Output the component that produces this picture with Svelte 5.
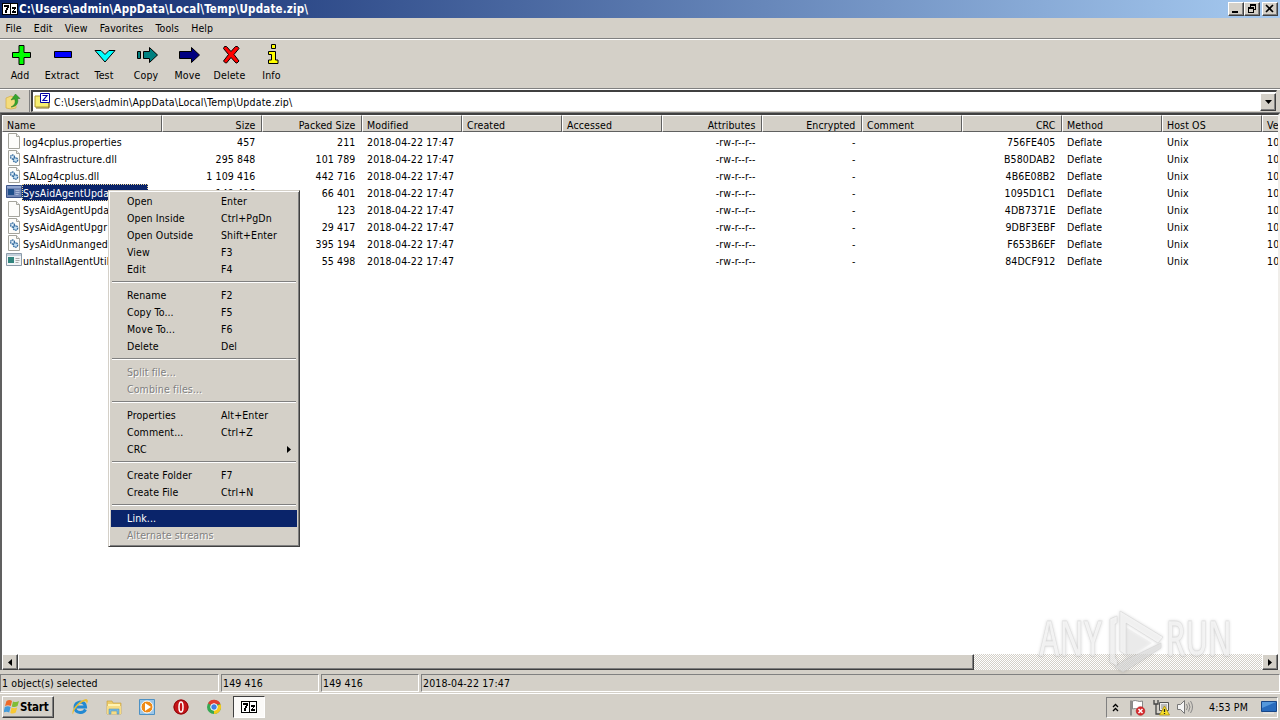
<script>
  const menus = ["File", "Edit", "View", "Favorites", "Tools", "Help"];
  const path = "C:\\Users\\admin\\AppData\\Local\\Temp\\Update.zip\\";

  const tools = [
    { name: "Add", width: 38 },
    { name: "Extract", width: 46 },
    { name: "Test", width: 38 },
    { name: "Copy", width: 46 },
    { name: "Move", width: 37 },
    { name: "Delete", width: 47 },
    { name: "Info", width: 37 },
  ];

  const columns = [
    { key: "name", label: "Name", width: 160 },
    { key: "size", label: "Size", right: true },
    { key: "packed", label: "Packed Size", right: true },
    { key: "modified", label: "Modified" },
    { key: "created", label: "Created" },
    { key: "accessed", label: "Accessed" },
    { key: "attributes", label: "Attributes", right: true },
    { key: "encrypted", label: "Encrypted", right: true },
    { key: "comment", label: "Comment" },
    { key: "crc", label: "CRC", right: true },
    { key: "method", label: "Method" },
    { key: "host", label: "Host OS" },
    { key: "version", label: "Version" },
  ];

  const files = [
    { icon: "file", name: "log4cplus.properties", size: "457", packed: "211", crc: "756FE405" },
    { icon: "dll", name: "SAInfrastructure.dll", size: "295 848", packed: "101 789", crc: "B580DAB2" },
    { icon: "dll", name: "SALog4cplus.dll", size: "1 109 416", packed: "442 716", crc: "4B6E08B2" },
    { icon: "exe", name: "SysAidAgentUpda", size: "149 416", packed: "66 401", crc: "1095D1C1", selected: true },
    { icon: "file", name: "SysAidAgentUpda", size: "", packed: "123", crc: "4DB7371E" },
    { icon: "dll", name: "SysAidAgentUpgr", size: "", packed: "29 417", crc: "9DBF3EBF" },
    { icon: "dll", name: "SysAidUnmangedU", size: "", packed: "395 194", crc: "F653B6EF" },
    { icon: "exe", name: "unInstallAgentUtil", size: "", packed: "55 498", crc: "84DCF912" },
  ].map((f) => ({
    ...f,
    modified: "2018-04-22 17:47",
    attributes: "-rw-r--r--",
    encrypted: "-",
    method: "Deflate",
    host: "Unix",
    version: "10",
  }));

  const groups = [
    [["Open", "Enter"], ["Open Inside", "Ctrl+PgDn"], ["Open Outside", "Shift+Enter"], ["View", "F3"], ["Edit", "F4"]],
    [["Rename", "F2"], ["Copy To...", "F5"], ["Move To...", "F6"], ["Delete", "Del"]],
    [["Split file...", ""], ["Combine files...", ""]],
    [["Properties", "Alt+Enter"], ["Comment...", "Ctrl+Z"], ["CRC", ""]],
    [["Create Folder", "F7"], ["Create File", "Ctrl+N"]],
    [["Link...", ""], ["Alternate streams", ""]],
  ];
  const disabled = ["Split file...", "Combine files...", "Alternate streams"];
  let active = "Link...";
</script>

{#snippet sevenZip()}
  <svg width="16" height="12" viewBox="0 0 16 12" shape-rendering="crispEdges">
    <path d="M0 0h16v12H0z" />
    <path d="M1 1h14v10H1z" fill="#fff" />
    <path d="M2 2h5v3H6v2H5v3H3V7h1V5h1V4H2zM8 1h1v10H8zM10 4h4v2h-1v1h-1v1h2v2h-4V8h1V7h1V6h-2z" />
  </svg>
{/snippet}

<div class="screen">
  <div class="title">
    {@render sevenZip()}
    <span class="caption">{path}</span>
    <div class="buttons">
      <button aria-label="Minimize"><svg width="12" height="10"><path d="M2 7h6v2H2z" /></svg></button>
      <button aria-label="Restore" class="restore"><svg width="12" height="10" shape-rendering="crispEdges"><path d="M4 0h6v6H8V5h1V2H5v1H4zM2 3h6v6H2zm1 2v3h4V5z" fill-rule="evenodd" /></svg></button>
      <button aria-label="Close"><svg width="12" height="10"><path d="M2 1l7 7M9 1L2 8" stroke="#000" stroke-width="1.600" /></svg></button>
    </div>
  </div>

  <div class="menubar">
    {#each menus as item}<span>{item}</span>{/each}
  </div>

  <div class="toolbar">
    {#each tools as tool}
      <div class="tool" style="width: {tool.width}px">
        <svg width="24" height="24" viewBox="0 0 24 24" stroke="#000" stroke-width="1">
          {#if tool.name === "Add"}
            <path d="M11 2.500h5v7h6.500v5H16v7h-5v-7H4.500v-5H11z" fill="#0f0" />
          {:else if tool.name === "Extract"}
            <path d="M4.500 8.500h17v6h-17z" fill="#00f" />
          {:else if tool.name === "Test"}
            <path d="M3 7.500h6l4 4 4-4h6L13 19z" fill="#0ff" />
          {:else if tool.name === "Copy"}
            <path d="M3.500 8.500h3v7h-3zM9.500 8.500h6v-4l8 7.500-8 7.500v-4h-6z" fill="#008080" />
          {:else if tool.name === "Move"}
            <path d="M3.500 8.500h12v-4l8 7.500-8 7.500v-4h-12z" fill="#000080" />
          {:else if tool.name === "Delete"}
            <path d="M6.500 3.500h2l4.500 5 4.500-5h2l1.500 2-5 6 5 6.500-2 2h-1L13 14.500 8.500 20h-1l-2-2 5-6.500-5-6z" fill="#f00" />
          {:else}
            <path d="M11.500 1.500h4v4h-4zM8.500 8.500h7v8.500h2.500v3.500H8.500V17h3v-5.500h-3z" fill="#ff0" />
          {/if}
        </svg>
        <span>{tool.name}</span>
      </div>
    {/each}
  </div>

  <div class="address">
    <div class="up">
      <svg width="17" height="18" viewBox="0 0 17 18">
        <path d="M1 6l5-2 5 2v10l-5 1-5-1z" fill="#f4dc7c" stroke="#d2ae45" stroke-width=".7" />
        <path d="M6 15c4-2 5-5 3.500-8L6 8l4.500-6L15 6.500h-2.500C14 11 11 15 6 15z" fill="#35a62e" stroke="#24751d" stroke-width=".5" />
      </svg>
    </div>
    <div class="combo">
      <svg width="17" height="16" viewBox="0 0 17 16">
        <path d="M1 3h5l2 2h7v9H1z" fill="#f7ef72" stroke="#b19829" />
        <path d="M2 15h13V5" stroke="#817119" fill="none" />
        <path d="M6.500.5h9v9h-9z" fill="#fff" stroke="#0000a0" />
        <path d="M8.500 2.500h4.500L9 7.500h4.500" fill="none" stroke="#0000b0" stroke-width="1.200" />
      </svg>
      <span>{path}</span>
      <button class="drop" aria-label="Show folders"><svg width="7" height="4"><path d="M0 0h7L3.500 4z" /></svg></button>
    </div>
  </div>

  <div class="list">
    <div class="row head">
      {#each columns as col}
        <div class="cell" class:right={col.right} style="width: {col.width ?? 100}px">{col.label}</div>
      {/each}
    </div>
    {#each files as file}
      <div class="row">
        {#each columns as col}
          <div class="cell" class:right={col.right} class:name={col.key === "name"} style="width: {col.width ?? 100}px">
            {#if col.key === "name"}
              <svg width="16" height="16" viewBox="0 0 16 16">
                {#if file.icon === "exe"}
                  <path d="M.5 1.500h15v12H.5z" fill={file.selected ? "#7186b5" : "#f2f5f7"} stroke={file.selected ? "#3c5489" : "#8b9aa8"} />
                  <path d="M1 2h14v2H1z" fill={file.selected ? "#92a7d0" : "#c3d0db"} />
                  <path d="M2 5h6v6H2z" fill={file.selected ? "#1e4f8b" : "#32857e"} />
                  <path d="M9.500 6.500h4M9.500 8.500h4M9.500 10.500h3" stroke={file.selected ? "#a9b8d8" : "#aaa"} />
                {:else}
                  <path d="M2.500.5h8l3 3v12h-11z" fill="#fcfcfa" stroke="#a4a49c" />
                  <path d="M10.500.5v3h3" fill="#eee" stroke="#a4a49c" />
                  {#if file.icon === "dll"}
                    <circle cx="6.500" cy="7" r="2" fill="#dcebf6" stroke="#346b9f" stroke-width="1.300" stroke-dasharray="1.500 .5" />
                    <circle cx="9.500" cy="10" r="2.200" fill="#c4e0f3" stroke="#346b9f" stroke-width="1.300" stroke-dasharray="1.500 .5" />
                  {/if}
                {/if}
              </svg>
              <span class="filename" class:selected={file.selected}>{file.name}</span>
            {:else}
              {file[col.key] ?? ""}
            {/if}
          </div>
        {/each}
      </div>
    {/each}
    <div class="scrollbar">
      <button aria-label="Scroll left"><svg width="4" height="7"><path d="M4 0v7L0 3.500z" /></svg></button>
      <div class="thumb"></div>
      <div class="track"></div>
      <button aria-label="Scroll right"><svg width="4" height="7"><path d="M0 0v7l4-3.500z" /></svg></button>
    </div>
  </div>

  <div class="status">
    <span class="first">1 object(s) selected</span>
    <span class="short">149 416</span>
    <span class="short">149 416</span>
    <span class="rest">2018-04-22 17:47</span>
  </div>

  <div class="taskbar">
    <button class="start">
      <svg width="16" height="16" viewBox="0 0 16 16">
        <path d="M2.500 2q3-2 5.500 0L6.800 7Q4 5.500 1 7z" fill="#ee6a28" />
        <path d="M9 2.400q3 1.500 6-.4L13.500 7q-3 2-5.700.4z" fill="#80bd37" />
        <path d="M.8 8q3-1.500 5.800 0l-1.400 5.500Q2.500 12-.5 13.500z" fill="#449bda" />
        <path d="M7.500 8.500q3 1.500 5.700 0l-1.400 5q-3 2-5.500.4z" fill="#f8c833" />
      </svg>
      <span>Start</span>
    </button>
    <div class="quick">
      <svg width="18" height="18" viewBox="0 0 18 18">
        <path d="M14.500 11.500Q12.500 15 9 14.500 4 14 4 9.500T9 4q5 0 5.500 5H5" fill="none" stroke="#2289d2" stroke-width="3" />
        <path d="M2 16.500C-1 13 8 2 15 1c3 .5 1.500 4 .5 5 .5-3-1-3.500-4-2C7 7 2.500 12 2 16.500z" fill="#e9bd32" />
      </svg>
      <svg width="18" height="18" viewBox="0 0 18 18">
        <path d="M2 3h5l1 2h8v11H2z" fill="#edcc6b" stroke="#c49c38" stroke-width=".6" />
        <path d="M3 6h12v3H3z" fill="#fff3b2" /><path d="M2 8h14v8H2z" fill="#f7dc83" />
        <path d="M4 16v-5h10v5h-2v-3H6v3z" fill="#78b9df" stroke="#4b8db7" stroke-width=".5" />
      </svg>
      <svg width="18" height="18" viewBox="0 0 18 18">
        <path d="M1.500 1.500h15v15h-15z" fill="#9bc6e8" stroke="#4d91c4" />
        <circle cx="9" cy="9" r="6" fill="#ef8a17" stroke="#fff" /><path d="M7 5l6 4-6 4z" fill="#fff" />
      </svg>
      <svg width="18" height="18" viewBox="0 0 18 18">
        <circle cx="9" cy="9" r="7.500" fill="#c51418" /><circle cx="9" cy="9" r="7" fill="none" stroke="#8c080c" />
        <ellipse cx="9" cy="9" rx="2" ry="5" fill="#c51418" stroke="#fff" stroke-width="1.500" />
      </svg>
      <svg width="18" height="18" viewBox="0 0 18 18">
        <circle cx="9" cy="9" r="7" fill="#36a852" />
        <path d="M9 9L3 5.200a7 7 0 0 1 12.500 1H9z" fill="#e13c30" />
        <path d="M9 9l6.500-2.800A7 7 0 0 1 9 16z" fill="#f6c91c" />
        <circle cx="9" cy="9" r="3.300" fill="#3e80e5" stroke="#fff" />
      </svg>
    </div>
    <div class="task">{@render sevenZip()}</div>
    <div class="tray">
      <svg class="chevron" width="7" height="9"><path d="M1 4l2.500-2.500L6 4M1 8l2.500-2.500L6 8" fill="none" stroke="#000" stroke-width="1.300" /></svg>
      <svg class="flag" width="17" height="17" viewBox="0 0 17 17">
        <path d="M2 1.500v15" stroke="#777" stroke-width="1.500" /><path d="M3.500 2q3-1 5 0t5 0v8q-3 1-5 0t-5 0z" fill="#fff" stroke="#888" />
        <circle cx="11.500" cy="12" r="4.300" fill="#d82b2f" stroke="#b3171a" stroke-width=".6" /><path d="M9.500 10l4 4m0-4l-4 4" stroke="#fff" stroke-width="1.500" />
      </svg>
      <svg class="network" width="17" height="17" viewBox="0 0 17 17">
        <path d="M6.500 3.500h9v8h-9z" fill="#eee" stroke="#555" /><path d="M8 5h6v5H8z" fill="#bbb" />
        <path d="M1 1v4h4V1M3 5v10h4" stroke="#444" fill="none" stroke-width="1.300" />
        <path d="M11.500 7l5 9h-10z" fill="#f8df28" stroke="#a48500" stroke-width=".7" /><path d="M11.500 10v3m0 1v1" stroke="#222" stroke-width="1.300" />
      </svg>
      <svg class="sound" width="18" height="16" viewBox="0 0 18 16">
        <path d="M1.500 5.500h3L8.500 1.500v13l-4-4h-3z" fill="#f5f5f5" stroke="#777" />
        <path d="M10.500 5q2 3 0 6M12.500 3.500q3 4.500 0 9M14.500 2q4 6 0 12" fill="none" stroke="#888" />
      </svg>
      <span>4:53 PM</span>
      <svg class="desktop" width="16" height="14" viewBox="0 0 16 14">
        <path d="M.5 1.500h15v10H.5z" fill="#276bbd" stroke="#174687" /><path d="M1 2h14L1 8z" fill="#5498dc" /><path d="M2 13h11" stroke="#eee" />
      </svg>
    </div>
  </div>

  <div class="context">
    {#each groups as group, i}
      {#if i}<div class="separator"></div>{/if}
      {#each group as [label, key]}
        <div class="item" class:active={label === active} class:disabled={disabled.includes(label)}>
          <span class="label">{label}</span><span>{key}</span>
          {#if label === "CRC"}<svg class="more" width="4" height="7"><path d="M0 0v7l4-3.500z" /></svg>{/if}
        </div>
      {/each}
    {/each}
  </div>

  <svg class="watermark" width="200" height="68" viewBox="0 0 200 68">
    <g fill="#fff" fill-opacity=".6" stroke="#c4c4c4" stroke-opacity=".35" stroke-width="1">
      <text x="4" y="49" textLength="63" lengthAdjust="spacingAndGlyphs">ANY</text>
      <text x="131" y="49" textLength="66" lengthAdjust="spacingAndGlyphs">RUN</text>
      <path d="M85 4l43 26-5 6-32-20v32l-6-4z" />
      <path d="M82 9l-7 3v43l7 4v-6l-2-2V17l2-1z" />
      <path d="M126 36v5L88 65l-8-5 9-6z" fill="#e4e4e4" />
      <path d="M91 20l26 16-26 17z" fill="#ddd" fill-opacity=".25" stroke="none" />
    </g>
  </svg>
</div>

<style>
  :global(body) {
    margin: 0;
    overflow: hidden;
  }

  .screen {
    position: relative;
    display: flex;
    flex-direction: column;
    width: 1280px;
    height: 720px;
    overflow: hidden;
    background: #d4d0c8;
    color: #000;
    font-family: "DejaVu Sans Condensed", "DejaVu Sans", sans-serif;
    font-stretch: condensed;
    font-size: 10.5px;
    letter-spacing: 0.12px;
    line-height: 17px;
    white-space: nowrap;
    cursor: default;
  }

  svg {
    display: block;
    flex: none;
  }

  button {
    display: flex;
    align-items: center;
    justify-content: center;
    flex: none;
    box-sizing: border-box;
    padding: 0;
    border: 1px solid;
    border-color: #fff #404040 #404040 #fff;
    box-shadow: inset -1px -1px #808080;
    background: #d4d0c8;
    color: #000;
    font: inherit;
  }

  .title {
    display: flex;
    align-items: center;
    height: 18px;
    padding: 0 2px;
    background: linear-gradient(90deg, #0a246a, #a6caf0);
    color: #fff;
    font-size: 11.5px;
    font-weight: bold;
  }

  .caption {
    flex: 1;
    padding-left: 1px;
    letter-spacing: 0.17px;
  }

  .buttons {
    display: flex;
  }

  .buttons button {
    width: 16px;
    height: 14px;
  }

  .restore {
    margin-right: 2px;
  }

  .menubar {
    display: flex;
    gap: 12.1px;
    height: 20px;
    padding-left: 5.5px;
    border-bottom: 1px solid #808080;
    line-height: 20px;
  }

  .toolbar {
    display: flex;
    height: 48px;
    border-top: 1px solid #fff;
    border-bottom: 1px solid #808080;
  }

  .tool {
    display: flex;
    flex-direction: column;
    align-items: center;
    padding-top: 3px;
  }

  .tool:first-child {
    padding-left: 1px;
  }

  .tool span {
    height: 17px;
  }

  .address {
    display: flex;
    height: 24px;
    border-top: 1px solid #fff;
    border-bottom: 1px solid #808080;
    box-sizing: border-box;
  }

  .up {
    width: 24px;
    padding: 2px 0 0 5px;
    border-right: 1px solid #808080;
  }

  .combo {
    display: flex;
    align-items: center;
    flex: 1;
    box-sizing: border-box;
    height: 22px;
    margin: 0 3px 0 1px;
    padding-left: 1px;
    border: 2px solid #404040;
    border-right: 1px solid #d4d0c8;
    border-bottom: 1px solid #d4d0c8;
    background: #fff;
  }

  .combo svg {
    margin-top: -2px;
  }

  .combo span {
    flex: 1;
    padding: 1px 0 0 3px;
    letter-spacing: 0.2px;
  }

  .drop {
    width: 16px;
    height: 18px;
  }

  .drop svg {
    margin: 0;
  }

  .list {
    display: flex;
    flex-direction: column;
    flex: none;
    height: 557px;
    box-sizing: border-box;
    border-top: 2px solid #404040;
    border-left: 2px solid #606060;
    border-right: 2px solid #f0eeea;
    background: #fff;
    overflow: hidden;
  }

  .row {
    display: flex;
    flex: none;
    height: 17px;
    line-height: 19px;
  }

  .head {
    margin-bottom: 1px;
    background: #d4d0c8;
  }

  .cell {
    flex: none;
    box-sizing: border-box;
    padding: 0 6.5px 0 5px;
    overflow: hidden;
  }

  .head .cell {
    border: 1px solid;
    border-color: #fff #606060 #606060 #fff;
    padding: 0 5.5px 0 4px;
    line-height: 18px;
  }

  .right {
    text-align: right;
  }

  .cell.name {
    display: flex;
    padding: 0 0 0 4px;
  }

  .filename {
    padding: 0 1px;
  }

  .selected {
    box-sizing: border-box;
    width: 126px;
    height: 17px;
    padding: 0;
    border: 1px dotted #f5db95;
    background: #0a246a;
    color: #fff;
    line-height: 17px;
  }

  .scrollbar {
    display: flex;
    height: 16px;
    margin-top: auto;
  }

  .scrollbar button {
    width: 16px;
    height: 16px;
  }

  .thumb {
    box-sizing: border-box;
    width: 956px;
    border: 1px solid;
    border-color: #fff #404040 #404040 #fff;
    box-shadow: inset -1px -1px #808080;
    background: #d4d0c8;
  }

  .track {
    flex: 1;
    background: repeating-conic-gradient(#d4d0c8 0 25%, #fff 0 50%) 0 0 / 2px 2px;
  }

  .status {
    display: flex;
    gap: 2px;
    height: 19px;
    padding-top: 4px;
  }

  .status span {
    box-sizing: border-box;
    height: 18px;
    border: 1px solid;
    border-color: #808080 #fff #fff #808080;
    padding-left: 1px;
    line-height: 17px;
  }

  .first {
    width: 219px;
  }

  .short {
    width: 98px;
  }

  .rest {
    flex: 1;
  }

  .taskbar {
    display: flex;
    align-items: center;
    flex: 1;
    border-top: 1px solid #fff;
    padding: 0 2px;
  }

  .start {
    width: 52px;
    height: 22px;
    justify-content: flex-start;
    padding-left: 1px;
    gap: 0;
    font-size: 11.5px;
    font-weight: bold;
    letter-spacing: -0.2px;
  }

  .quick {
    display: flex;
    gap: 15.6px;
    margin-left: 17px;
  }

  .task {
    display: flex;
    align-items: center;
    justify-content: center;
    box-sizing: border-box;
    width: 32px;
    height: 22px;
    margin-left: 10px;
    border: 1px solid;
    border-color: #404040 #fff #fff #404040;
    background: #fbfaf8;
  }

  .tray {
    display: flex;
    align-items: center;
    box-sizing: border-box;
    width: 172px;
    height: 21px;
    margin-left: auto;
    padding-left: 5px;
    border: 1px solid;
    border-color: #808080 #fff #fff #808080;
  }

  .flag {
    margin-left: 10px;
  }

  .network {
    margin-left: 7px;
  }

  .sound {
    margin-left: 6px;
  }

  .tray span {
    margin-left: 15px;
  }

  .desktop {
    margin-left: auto;
  }

  .context {
    position: absolute;
    left: 108px;
    top: 190px;
    box-sizing: border-box;
    width: 192px;
    height: 357px;
    padding: 2px;
    border: 1px solid;
    border-color: #d4d0c8 #404040 #404040 #d4d0c8;
    box-shadow: inset 1px 1px #fff, inset -1px -1px #808080;
    background: #d4d0c8;
  }

  .item {
    display: flex;
    align-items: center;
    height: 17px;
    padding-left: 16px;
  }

  .label {
    width: 94px;
  }

  .more {
    margin-left: auto;
    margin-right: 6px;
  }

  .separator {
    height: 1px;
    margin: 3px 1px 4px;
    border-top: 1px solid #808080;
    background: #fff;
  }

  .active {
    background: #0a246a;
    color: #fff;
  }

  .disabled {
    color: #808080;
    text-shadow: 1px 1px #fff;
  }

  .watermark {
    position: absolute;
    left: 1035px;
    top: 607px;
    font-family: "Open Sans", sans-serif;
    font-size: 48px;
    font-weight: 600;
    font-stretch: normal;
    letter-spacing: 0;
    filter: drop-shadow(0 0 1.5px rgba(0, 0, 0, 0.25));
  }
</style>
